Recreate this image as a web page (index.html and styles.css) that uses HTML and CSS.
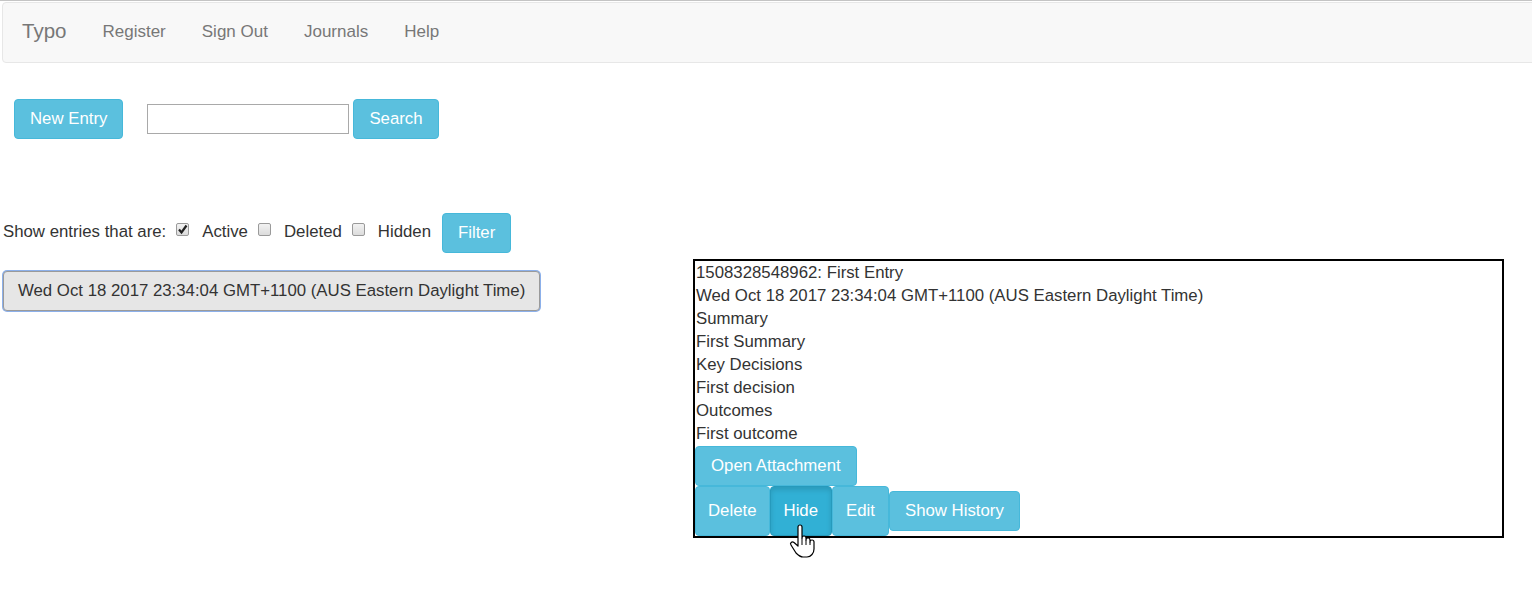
FILE: index.html
```html
<!DOCTYPE html>
<html>
<head>
<meta charset="utf-8">
<title>Typo</title>
<link rel="stylesheet" href="styles.css">
</head>
<body>
<div class="page">
  <nav class="navbar">
    <span class="brand">Typo</span>
    <a class="nav-link">Register</a>
    <a class="nav-link">Sign Out</a>
    <a class="nav-link">Journals</a>
    <a class="nav-link">Help</a>
  </nav>

  <div class="toolbar">
    <button class="btn btn-info">New Entry</button>
    <input class="search-input" type="text">
    <button class="btn btn-info search-btn">Search</button>
  </div>

  <div class="filter-row">
    <span class="filter-label">Show entries that are:</span>
    <span class="cb checked"><svg viewBox="0 0 13 13" width="13" height="13"><path d="M3 6.5 L5.5 9.5 L10.5 2.5" fill="none" stroke="#222" stroke-width="2.2"/></svg></span>
    <span class="cb-label">Active</span>
    <span class="cb"></span>
    <span class="cb-label">Deleted</span>
    <span class="cb"></span>
    <span class="cb-label">Hidden</span>
    <button class="btn btn-info filter-btn">Filter</button>
  </div>

  <div class="content">
    <div class="list-col">
      <button class="btn btn-default entry-btn">Wed Oct 18 2017 23:34:04 GMT+1100 (AUS Eastern Daylight Time)</button>
    </div>
    <div class="detail">
      <div class="line">1508328548962: First Entry</div>
      <div class="line">Wed Oct 18 2017 23:34:04 GMT+1100 (AUS Eastern Daylight Time)</div>
      <div class="line">Summary</div>
      <div class="line">First Summary</div>
      <div class="line">Key Decisions</div>
      <div class="line">First decision</div>
      <div class="line">Outcomes</div>
      <div class="line">First outcome</div>
      <div class="attach-row">
        <button class="btn btn-info">Open Attachment</button>
      </div>
      <div class="action-row">
        <button class="btn btn-info tall delete-btn">Delete</button>
        <button class="btn btn-info tall active">Hide</button>
        <button class="btn btn-info tall">Edit</button>
        <button class="btn btn-info">Show History</button>
      </div>
    </div>
  </div>

  <svg class="cursor" viewBox="0 0 26 34" width="26" height="34">
    <path d="M9 3 A2 2 0 0 1 13 3 L13 14 A2 2 0 0 1 17 14 L17 16 A2 2 0 0 1 21 16 L21 18 A2 2 0 0 1 25 18 L25 25 C25 29 22 33 18 33 L14 33 C11 33 9 31 7 29 L2 21 C0.5 19 3 17 5 18.5 L9 22 Z" fill="#fff" stroke="#000" stroke-width="1.2" stroke-linejoin="round"/>
    <path d="M13 14 L13 21 M17 16 L17 21 M21 18 L21 21" fill="none" stroke="#000" stroke-width="1"/>
  </svg>
</div>
</body>
</html>
```

FILE: styles.css
```css
html {
  overflow: hidden;
}
body {
  margin: 0;
  border-top: 1px solid #c4c4c4;
  font-family: "Liberation Sans", Arial, sans-serif;
  font-size: 16.8px;
  line-height: 1.42857;
  color: #333;
  background: #fff;
}
.page {
  position: relative;
  min-height: 598px;
  padding: 1px 0 0 2px;
}
.navbar {
  display: flex;
  align-items: center;
  height: 59px;
  margin-right: -20px;
  background: #f8f8f8;
  border: 1px solid #e7e7e7;
  border-radius: 4px;
}
.brand {
  font-size: 20.5px;
  color: #777;
  padding: 0 18px 0 19px;
  margin-top: -3px;
}
.nav-link {
  color: #777;
  padding: 0 18px;
  font-size: 17px;
}
.btn {
  display: inline-flex;
  align-items: center;
  justify-content: center;
  box-sizing: border-box;
  height: 40px;
  padding: 0 15px;
  margin: 0;
  font-family: "Liberation Sans", Arial, sans-serif;
  font-size: 16.8px;
  border: 1px solid transparent;
  border-radius: 4px;
  white-space: nowrap;
}
.btn-info {
  color: #fff;
  background: #5bc0de;
  border-color: #46b8da;
}
.btn-info.active {
  background: #31b0d5;
  border-color: #269abc;
  box-shadow: inset 0 3px 5px rgba(0,0,0,0.125);
}
.btn-default {
  color: #333;
  background: #e6e6e6;
  border-color: #adadad;
}
.toolbar {
  display: flex;
  align-items: center;
  margin-top: 36px;
  padding-left: 12px;
}
.search-input {
  box-sizing: border-box;
  width: 202px;
  height: 30px;
  margin: 0 4px 0 24px;
  border: 1px solid #a9a9a9;
  padding: 1px 2px;
  font-size: 16px;
}
.filter-row {
  display: flex;
  align-items: center;
  margin-top: 74px;
  padding-left: 1px;
}
.filter-label {
  margin-right: 10px;
  margin-top: -3px;
}
.cb {
  display: inline-block;
  box-sizing: border-box;
  width: 13px;
  height: 13px;
  border: 1px solid #9a9a9a;
  border-radius: 2px;
  background: linear-gradient(#f2f2f2, #dcdcdc);
  margin-top: -8px;
}
.cb svg {
  display: block;
  margin: -1px 0 0 -1px;
}
.cb-label {
  margin: -3px 10px 0 13px;
}
.filter-btn {
  margin-left: 1px;
}
.content {
  display: flex;
  align-items: flex-start;
  margin-top: 6px;
}
.list-col {
  width: 691px;
  flex: none;
  padding-top: 12px;
}
.entry-btn {
  margin-left: 1px;
  padding: 0 14px;
  border-color: #9a9a9a;
  box-shadow: 0 0 0 1px #8cb0ea;
}
.detail {
  box-sizing: border-box;
  width: 811px;
  border: 2px solid #000;
}
.line {
  height: 23px;
  padding-left: 1px;
}
.attach-row {
  display: flex;
  margin-top: 1px;
}
.action-row {
  display: flex;
  align-items: center;
}
.btn.tall {
  height: 50px;
  padding: 0 13px;
}
.btn.tall.delete-btn {
  padding: 0 12px;
}
.cursor {
  position: absolute;
  display: block;
  z-index: 10;
  left: 789px;
  top: 523px;
  overflow: visible;
}
```
